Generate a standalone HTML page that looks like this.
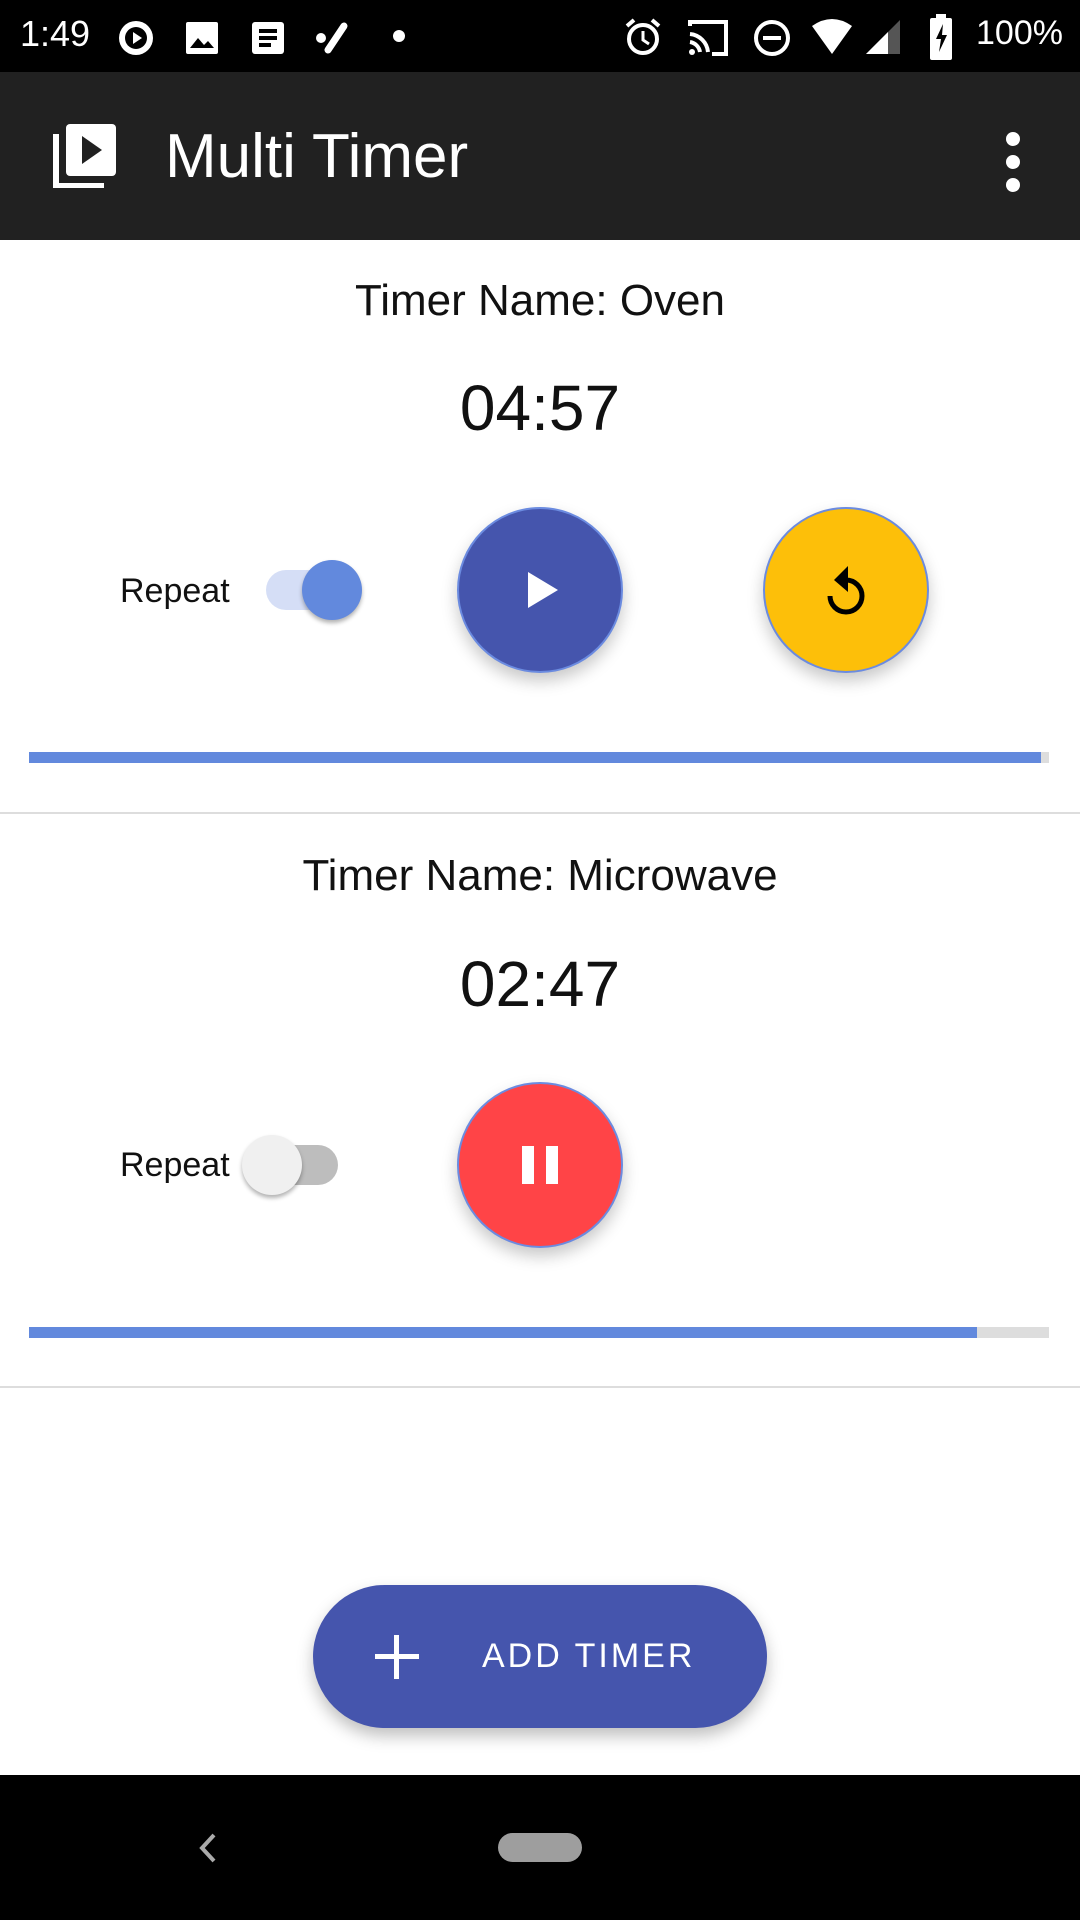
<!DOCTYPE html>
<html><head><meta charset="utf-8"><style>
*{margin:0;padding:0;box-sizing:border-box}
body{width:1080px;height:1920px;background:#fff;font-family:"Liberation Sans",Roboto,sans-serif;position:relative;overflow:hidden}
.abs{position:absolute}
.sb{left:0;top:0;width:1080px;height:72px;background:#000;color:#fff}
.ab{left:0;top:72px;width:1080px;height:168px;background:#212121}
.c{left:0;width:1080px;text-align:center;color:#111}
.name{font-size:44px}
.time{font-size:64px}
.rep{font-size:34px;color:#111}
.btn{width:166px;height:166px;border-radius:50%;border:2px solid #6b8be0;box-shadow:0 8px 16px rgba(0,0,0,.22)}
.div{left:0;width:1080px;height:2px;background:#ddd}
</style></head><body>
<div class="abs sb">
 <div class="abs" style="left:20px;top:13px;font-size:36px">1:49</div>
 <svg class="abs" style="left:116px;top:18px" width="40" height="40" viewBox="0 0 40 40"><circle cx="20" cy="20" r="17" fill="#fff"/><circle cx="20" cy="20" r="11" fill="#000"/><path d="M17 14v12l9-6z" fill="#fff"/></svg>
 <svg class="abs" style="left:184px;top:20px" width="36" height="36" viewBox="0 0 36 36"><rect x="2" y="2" width="32" height="32" rx="2" fill="#fff"/><path d="M6 28l8-10 6 7 4-4 6 7z" fill="#000"/></svg>
 <svg class="abs" style="left:250px;top:20px" width="36" height="36" viewBox="0 0 36 36"><rect x="2" y="2" width="32" height="32" rx="3" fill="#fff"/><rect x="9" y="9" width="18" height="4" fill="#000"/><rect x="9" y="16" width="18" height="4" fill="#000"/><rect x="9" y="23" width="12" height="4" fill="#000"/></svg>
 <svg class="abs" style="left:312px;top:20px" width="40" height="36" viewBox="0 0 40 36"><circle cx="9" cy="18" r="5" fill="#fff"/><path d="M16 30L32 6" stroke="#fff" stroke-width="7" stroke-linecap="round"/></svg>
 <div class="abs" style="left:393px;top:30px;width:12px;height:12px;border-radius:50%;background:#fff"></div>
 <svg class="abs" style="left:622px;top:16px" width="42" height="42" viewBox="0 0 42 42"><circle cx="21" cy="23" r="14" fill="none" stroke="#fff" stroke-width="4"/><path d="M21 15v9l6 4" stroke="#fff" stroke-width="3" fill="none"/><path d="M5 10l7-6M37 10l-7-6" stroke="#fff" stroke-width="4"/></svg>
 <svg class="abs" style="left:686px;top:18px" width="44" height="40" viewBox="0 0 44 40"><path d="M4 8V4h36v32H26" stroke="#fff" stroke-width="4" fill="none"/><path d="M4 16a20 20 0 0 1 18 18M4 24a12 12 0 0 1 10 10" stroke="#fff" stroke-width="4" fill="none"/><circle cx="6" cy="34" r="3" fill="#fff"/></svg>
 <svg class="abs" style="left:752px;top:18px" width="40" height="40" viewBox="0 0 40 40"><circle cx="20" cy="20" r="16" fill="none" stroke="#fff" stroke-width="4"/><rect x="11" y="18" width="18" height="4" fill="#fff"/></svg>
 <svg class="abs" style="left:810px;top:18px" width="96" height="38" viewBox="0 0 96 38"><path d="M2 8Q22-6 42 8L22 36z" fill="#fff"/><path d="M56 36L90 2v34z" fill="#555"/><path d="M56 36L78 14v22z" fill="#fff"/></svg>
 <svg class="abs" style="left:928px;top:14px" width="26" height="46" viewBox="0 0 26 46"><rect x="8" y="0" width="10" height="5" fill="#fff"/><rect x="2" y="4" width="22" height="42" rx="2" fill="#fff"/><path d="M15 10l-7 15h5l-2 13 8-17h-5z" fill="#000"/></svg>
 <div class="abs" style="left:976px;top:14px;font-size:34px">100%</div>
</div>
<div class="abs ab">
 <svg class="abs" style="left:52px;top:52px" width="64" height="64" viewBox="0 0 64 64"><path d="M4 10v52h48" stroke="#fff" stroke-width="6" fill="none"/><rect x="14" y="0" width="50" height="52" rx="4" fill="#fff"/><path d="M30 12v28l20-14z" fill="#212121"/></svg>
 <div class="abs" style="left:165px;top:49px;font-size:62px;color:#fff">Multi Timer</div>
 <div class="abs" style="left:1006px;top:60px;width:14px;height:14px;border-radius:50%;background:#fff;box-shadow:0 23px 0 #fff,0 46px 0 #fff"></div>
</div>

<div class="abs c name" style="top:276px">Timer Name: Oven</div>
<div class="abs c time" style="top:371px">04:57</div>
<div class="abs rep" style="left:120px;top:572px">Repeat</div>
<div class="abs" style="left:266px;top:570px;width:84px;height:40px;border-radius:20px;background:#d5def6"></div>
<div class="abs" style="left:302px;top:560px;width:60px;height:60px;border-radius:50%;background:#6289dd;box-shadow:0 3px 4px rgba(0,0,0,.3)"></div>
<div class="abs btn" style="left:457px;top:507px;background:#4555ad"></div>
<svg class="abs" style="left:520px;top:568px" width="44" height="44" viewBox="0 0 44 44"><path d="M8 4v36l30-18z" fill="#fff"/></svg>
<div class="abs btn" style="left:763px;top:507px;background:#fdbf09"></div>
<svg class="abs" style="left:816px;top:558px" width="60" height="70" viewBox="0 0 60 70"><path d="M30 22a16 16 0 1 1-16 16" stroke="#000" stroke-width="5" fill="none"/><path d="M32 8l-14 14 14 12z" fill="#000"/></svg>
<div class="abs" style="left:29px;top:752px;width:1020px;height:11px;background:#ddd"></div>
<div class="abs" style="left:29px;top:752px;width:1012px;height:11px;background:#6289dd"></div>
<div class="abs div" style="top:812px"></div>

<div class="abs c name" style="top:851px">Timer Name: Microwave</div>
<div class="abs c time" style="top:947px">02:47</div>
<div class="abs rep" style="left:120px;top:1146px">Repeat</div>
<div class="abs" style="left:252px;top:1145px;width:86px;height:40px;border-radius:20px;background:#bdbdbd"></div>
<div class="abs" style="left:242px;top:1135px;width:60px;height:60px;border-radius:50%;background:#f0f0f0;box-shadow:0 3px 4px rgba(0,0,0,.3)"></div>
<div class="abs btn" style="left:457px;top:1082px;background:#ff4447"></div>
<div class="abs" style="left:522px;top:1146px;width:12px;height:38px;background:#fff"></div>
<div class="abs" style="left:546px;top:1146px;width:12px;height:38px;background:#fff"></div>
<div class="abs" style="left:29px;top:1327px;width:1020px;height:11px;background:#ddd"></div>
<div class="abs" style="left:29px;top:1327px;width:948px;height:11px;background:#6289dd"></div>
<div class="abs div" style="top:1386px"></div>

<div class="abs" style="left:313px;top:1585px;width:454px;height:143px;border-radius:72px;background:#4555ad;box-shadow:0 8px 16px rgba(0,0,0,.25)"></div>
<div class="abs" style="left:375px;top:1654px;width:44px;height:5px;background:#fff"></div>
<div class="abs" style="left:394px;top:1635px;width:5px;height:44px;background:#fff"></div>
<div class="abs" style="left:482px;top:1637px;font-size:34px;color:#fff;letter-spacing:3px;font-weight:500">ADD TIMER</div>

<div class="abs" style="left:0;top:1775px;width:1080px;height:145px;background:#000"></div>
<svg class="abs" style="left:196px;top:1832px" width="24" height="32" viewBox="0 0 24 32"><path d="M18 3L6 16l12 13" stroke="#aaa" stroke-width="4" fill="none"/></svg>
<div class="abs" style="left:498px;top:1833px;width:84px;height:29px;border-radius:15px;background:#9e9e9e"></div>
</body></html>
